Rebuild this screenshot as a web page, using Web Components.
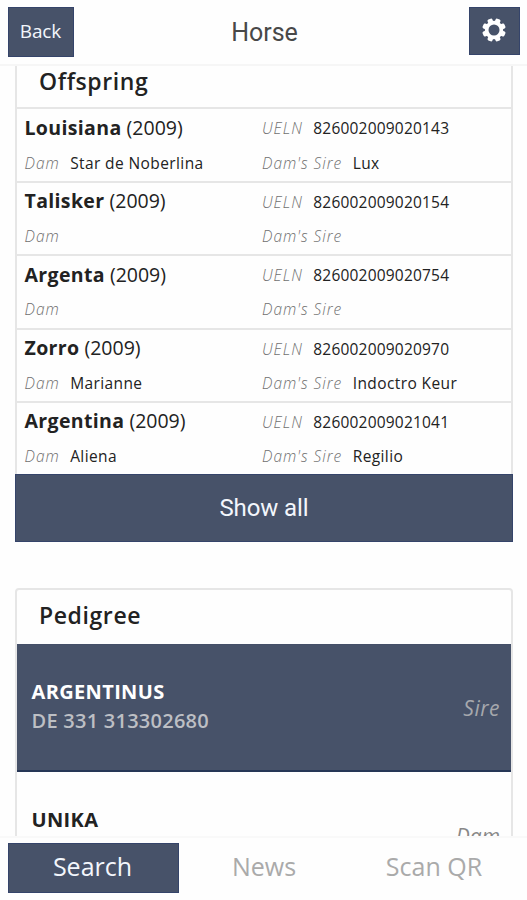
<!DOCTYPE html>
<html lang="en">
<head>
<meta charset="utf-8">
<title>Horse</title>
<style>
  body {
    margin: 0;
    background: #fefefe;
    color: #222;
    font-family: "Open Sans", "Noto Sans", sans-serif;
  }
</style>
</head>
<body>
<horse-app></horse-app>

<script>
const offspring = [
  { name: "Louisiana", year: 2009, ueln: "826002009020143", dam: "Star de Noberlina", damSire: "Lux" },
  { name: "Talisker", year: 2009, ueln: "826002009020154", dam: "", damSire: "" },
  { name: "Argenta", year: 2009, ueln: "826002009020754", dam: "", damSire: "" },
  { name: "Zorro", year: 2009, ueln: "826002009020970", dam: "Marianne", damSire: "Indoctro Keur" },
  { name: "Argentina", year: 2009, ueln: "826002009021041", dam: "Aliena", damSire: "Regilio" },
];

class AppHeader extends HTMLElement {
  constructor() {
    super();
    this.attachShadow({ mode: "open" });
  }

  connectedCallback() {
    this.shadowRoot.innerHTML = `
      <style>
        :host {
          display: flex;
          justify-content: space-between;
          align-items: flex-start;
          box-sizing: border-box;
          height: 66px;
          padding: 7px 7px 0 8px;
          background: #fefefe;
          border-bottom: 2px solid #f6f6f6;
        }
        button {
          box-sizing: border-box;
          margin: 0;
          padding: 0;
          border: 1px solid #35446a;
          background: #475269;
          color: #f3f6fc;
          font: 19px "Open Sans", sans-serif;
        }
        .back {
          width: 66px;
          height: 50px;
          padding: 0 1px 2px 0;
          letter-spacing: -0.1px;
        }
        .settings {
          display: flex;
          align-items: center;
          justify-content: center;
          width: 51px;
          height: 48px;
          padding-bottom: 2px;
        }
        .side {
          display: flex;
          width: 66px;
        }
        .right {
          justify-content: flex-end;
        }
        h1 {
          margin: 0;
          padding-left: 1px;
          font: 400 25px/51px Roboto, sans-serif;
          color: #484848;
        }
      </style>
      <div class="side"><button class="back">Back</button></div>
      <h1><slot></slot></h1>
      <div class="side right">
        <button class="settings" aria-label="Settings">
          <svg width="24" height="24" viewBox="-12 -12 24 24">
            <g fill="#fff">
              <rect x="-2.6" y="-11.8" width="5.2" height="23.6" rx="1.4" transform="rotate(22.5)"/>
              <rect x="-2.6" y="-11.8" width="5.2" height="23.6" rx="1.4" transform="rotate(67.5)"/>
              <rect x="-2.6" y="-11.8" width="5.2" height="23.6" rx="1.4" transform="rotate(112.5)"/>
              <rect x="-2.6" y="-11.8" width="5.2" height="23.6" rx="1.4" transform="rotate(157.5)"/>
              <circle r="9.2"/>
            </g>
            <circle r="5.5" fill="#475269"/>
          </svg>
        </button>
      </div>
    `;
  }
}
customElements.define("app-header", AppHeader);

class InfoCard extends HTMLElement {
  constructor() {
    super();
    this.attachShadow({ mode: "open" });
  }

  connectedCallback() {
    this.shadowRoot.innerHTML = `
      <style>
        :host {
          display: block;
          box-sizing: border-box;
          border: 2px solid #e6e6e6;
          border-radius: 4px;
          background: #fefefe;
        }
        h2 {
          margin: 0;
          padding: 9px 0 13px 22px;
          font-size: 23px;
          font-weight: 600;
          line-height: 32px;
          letter-spacing: 0.6px;
        }
        /* top part scrolled away under the header */
        :host([scrolled]) {
          border-width: 0 2px;
          border-radius: 0;
        }
        :host([scrolled]) h2 {
          padding: 0 0 10.4px 22px;
          line-height: 31px;
        }
      </style>
      <h2>${this.getAttribute("heading")}</h2>
      <slot></slot>
    `;
  }
}
customElements.define("info-card", InfoCard);

class LabelValue extends HTMLElement {
  constructor() {
    super();
    this.attachShadow({ mode: "open" });
  }

  connectedCallback() {
    this.shadowRoot.innerHTML = `
      <style>
        :host {
          display: flex;
          align-items: baseline;
          gap: 10.5px;
          white-space: nowrap;
          font-size: 15.5px;
        }
        .label {
          font-style: italic;
          font-weight: 300;
          letter-spacing: 0.95px;
          color: #707070;
        }
        .value {
          font-weight: 500;
          letter-spacing: var(--value-spacing, 0.4px);
        }
      </style>
      <span class="label">${this.getAttribute("label")}</span>
      <span class="value"><slot></slot></span>
    `;
  }
}
customElements.define("label-value", LabelValue);

class OffspringRow extends HTMLElement {
  constructor() {
    super();
    this.attachShadow({ mode: "open" });
  }

  set horse(horse) {
    this._horse = horse;
    this.render();
  }

  render() {
    const { name, year, ueln, dam, damSire } = this._horse;
    this.shadowRoot.innerHTML = `
      <style>
        :host {
          display: grid;
          grid-template-columns: 237.5px 1fr;
          grid-template-rows: 36px 34.4px;
          align-items: center;
          box-sizing: border-box;
          height: 73.4px;
          padding-left: 7.5px;
          border-top: 2px solid #e6e6e6;
        }
        .name {
          font-size: 19.5px;
          white-space: nowrap;
        }
        b {
          font-weight: 700;
          letter-spacing: 0.35px;
        }
        .ueln {
          padding-top: 2px;
          --value-spacing: 0.2px;
        }
      </style>
      <div class="name"><b>${name}</b> (${year})</div>
      <label-value class="ueln" label="UELN">${ueln}</label-value>
      <label-value label="Dam">${dam}</label-value>
      <label-value label="Dam's Sire">${damSire}</label-value>
    `;
  }
}
customElements.define("offspring-row", OffspringRow);

class PedigreeEntry extends HTMLElement {
  constructor() {
    super();
    this.attachShadow({ mode: "open" });
  }

  connectedCallback() {
    this.shadowRoot.innerHTML = `
      <style>
        :host {
          display: flex;
          align-items: center;
          justify-content: space-between;
          box-sizing: border-box;
          height: 128px;
          padding: 0 11px 0 14.5px;
        }
        :host([selected]) {
          background: #475269;
          border-top: 1px solid #444f68;
          border-bottom: 2px solid #263656;
          color: #fff;
        }
        .horse {
          padding-bottom: 3px;
          font-size: 20px;
          line-height: 29px;
        }
        .name {
          font-weight: 700;
          letter-spacing: 0.35px;
        }
        .number {
          min-height: 29px;
          font-weight: 600;
          letter-spacing: 0.25px;
          color: #bdbfc4;
        }
        .role {
          font-style: italic;
          font-size: 21px;
          letter-spacing: 0.5px;
          color: #a6a8ad;
        }
        :host([selected]) .role {
          padding-top: 2px;
          font-weight: 500;
        }
        :host(:not([selected])) .role {
          letter-spacing: 0;
          color: #888;
        }
      </style>
      <div class="horse">
        <div class="name">${this.getAttribute("name")}</div>
        <div class="number"><slot></slot></div>
      </div>
      <div class="role">${this.getAttribute("role-name")}</div>
    `;
  }
}
customElements.define("pedigree-entry", PedigreeEntry);

class TabBar extends HTMLElement {
  constructor() {
    super();
    this.attachShadow({ mode: "open" });
  }

  connectedCallback() {
    this.shadowRoot.innerHTML = `
      <style>
        :host {
          display: flex;
          box-sizing: border-box;
          height: 64px;
          padding: 5px 8px 0;
          background: #fefefe;
          border-top: 2px solid #f9f9f9;
        }
        a {
          flex: 1;
          box-sizing: border-box;
          height: 50px;
          font-size: 25px;
          line-height: 47px;
          text-align: center;
          color: #aaa;
        }
        .active {
          flex: none;
          width: 171px;
          padding-right: 2px;
          background: #475269;
          border: 1px solid #35446a;
          line-height: 45px;
          color: #f3f6fc;
        }
      </style>
      <a class="active">Search</a>
      <a>News</a>
      <a>Scan QR</a>
    `;
  }
}
customElements.define("tab-bar", TabBar);

class HorseApp extends HTMLElement {
  constructor() {
    super();
    this.attachShadow({ mode: "open" });
  }

  connectedCallback() {
    this.shadowRoot.innerHTML = `
      <style>
        :host {
          display: flex;
          flex-direction: column;
          height: 900px;
          overflow: hidden;
        }
        main {
          flex: 1;
          min-height: 0;
          overflow: hidden;
          display: flex;
          flex-direction: column;
          gap: 45.6px;
          padding: 0 14px 0 15px;
        }
        info-card {
          flex: none;
        }
        .show-all {
          display: block;
          box-sizing: border-box;
          width: calc(100% + 4px);
          height: 68px;
          margin: 0 -2px;
          padding: 0;
          border: 1px solid #35446a;
          background: #475269;
          color: #f3f6fc;
          font: 24px Roboto, sans-serif;
          letter-spacing: -0.1px;
        }
      </style>
      <app-header>Horse</app-header>
      <main>
        <info-card scrolled heading="Offspring">
          <div class="rows"></div>
          <button class="show-all">Show all</button>
        </info-card>
        <info-card heading="Pedigree">
          <pedigree-entry selected name="ARGENTINUS" role-name="Sire">DE 331 313302680</pedigree-entry>
          <pedigree-entry name="UNIKA" role-name="Dam"></pedigree-entry>
        </info-card>
      </main>
      <tab-bar></tab-bar>
    `;

    const rows = this.shadowRoot.querySelector(".rows");
    offspring.forEach(horse => {
      const row = document.createElement("offspring-row");
      row.horse = horse;
      rows.appendChild(row);
    });
  }
}
customElements.define("horse-app", HorseApp);
</script>
</body>
</html>
